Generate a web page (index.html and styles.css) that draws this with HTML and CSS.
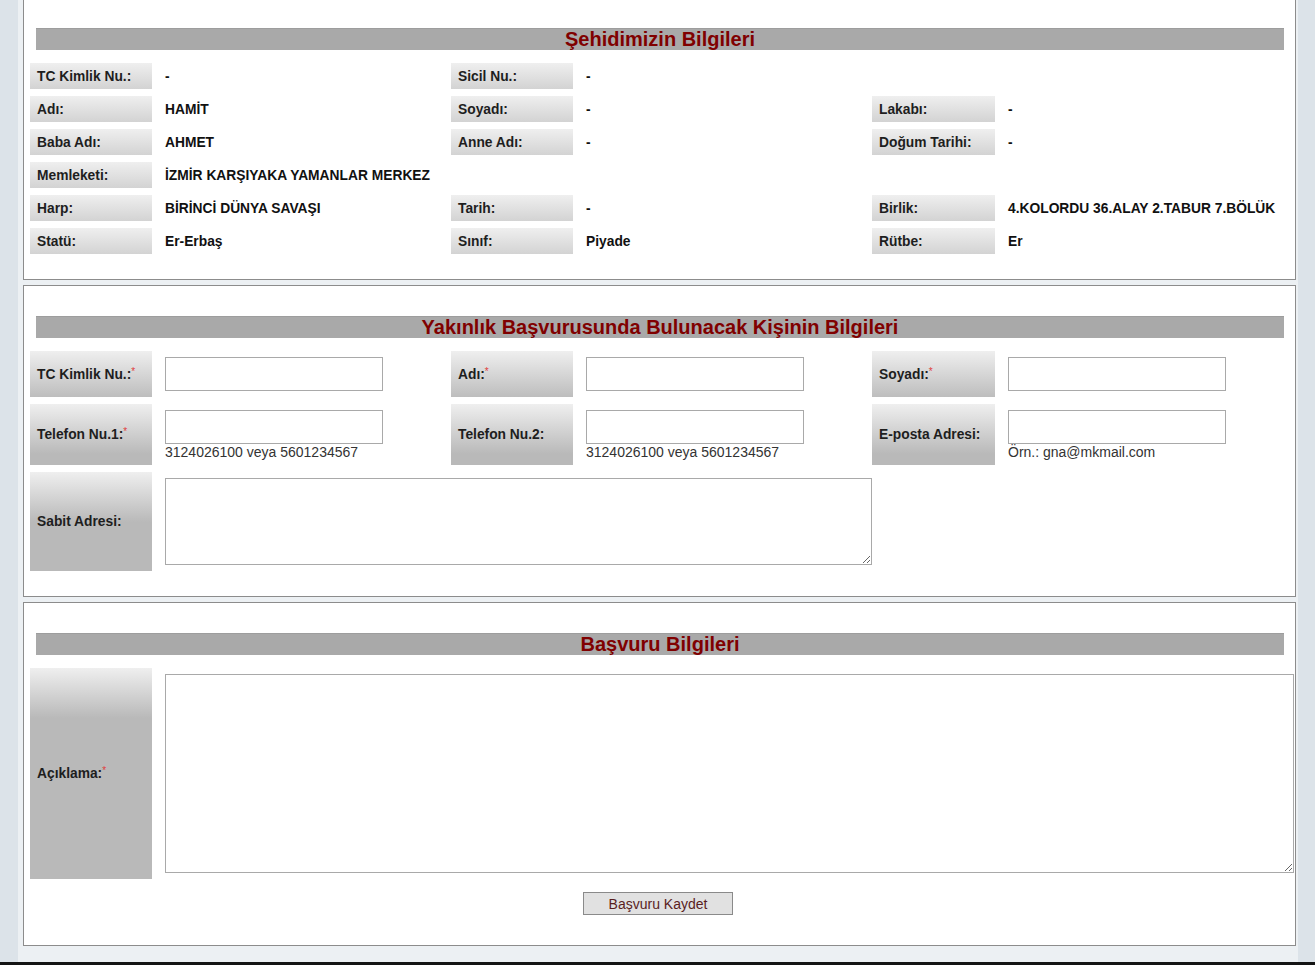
FILE: index.html
```html
<!DOCTYPE html>
<html lang="tr">
<head>
<meta charset="utf-8">
<title>Yakınlık Başvurusu</title>
<link rel="stylesheet" href="styles.css">
</head>
<body>
<div class="page">

  <section class="panel panel-martyr">
    <h2 class="band">Şehidimizin Bilgileri</h2>
    <table class="grid info">
      <colgroup>
        <col class="c-label"><col class="c-value"><col class="c-label"><col class="c-value"><col class="c-label3"><col class="c-value3">
      </colgroup>
      <tr>
        <th>TC Kimlik Nu.:</th><td>-</td>
        <th>Sicil Nu.:</th><td>-</td>
        <td class="blank"></td><td></td>
      </tr>
      <tr>
        <th>Adı:</th><td>HAMİT</td>
        <th>Soyadı:</th><td>-</td>
        <th>Lakabı:</th><td>-</td>
      </tr>
      <tr>
        <th>Baba Adı:</th><td>AHMET</td>
        <th>Anne Adı:</th><td>-</td>
        <th>Doğum Tarihi:</th><td>-</td>
      </tr>
      <tr>
        <th>Memleketi:</th><td>İZMİR KARŞIYAKA YAMANLAR MERKEZ</td>
        <td class="blank"></td><td></td>
        <td class="blank"></td><td></td>
      </tr>
      <tr>
        <th>Harp:</th><td>BİRİNCİ DÜNYA SAVAŞI</td>
        <th>Tarih:</th><td>-</td>
        <th>Birlik:</th><td>4.KOLORDU 36.ALAY 2.TABUR 7.BÖLÜK</td>
      </tr>
      <tr>
        <th>Statü:</th><td>Er-Erbaş</td>
        <th>Sınıf:</th><td>Piyade</td>
        <th>Rütbe:</th><td>Er</td>
      </tr>
    </table>
  </section>

  <section class="panel">
    <h2 class="band">Yakınlık Başvurusunda Bulunacak Kişinin Bilgileri</h2>
    <table class="grid form">
      <colgroup>
        <col class="c-label"><col class="c-value"><col class="c-label"><col class="c-value"><col class="c-label3"><col class="c-value3">
      </colgroup>
      <tr>
        <th>TC Kimlik Nu.:<span class="req">*</span></th>
        <td><input class="field" type="text"></td>
        <th>Adı:<span class="req">*</span></th>
        <td><input class="field" type="text"></td>
        <th>Soyadı:<span class="req">*</span></th>
        <td><input class="field" type="text"></td>
      </tr>
      <tr>
        <th>Telefon Nu.1:<span class="req">*</span></th>
        <td><input class="field" type="text"><span class="hint">3124026100 veya 5601234567</span></td>
        <th>Telefon Nu.2:</th>
        <td><input class="field" type="text"><span class="hint">3124026100 veya 5601234567</span></td>
        <th>E-posta Adresi:</th>
        <td><input class="field" type="text"><span class="hint">Örn.: gna@mkmail.com</span></td>
      </tr>
      <tr>
        <th class="tall">Sabit Adresi:</th>
        <td colspan="3"><textarea class="address"></textarea></td>
        <td class="blank"></td><td></td>
      </tr>
    </table>
  </section>

  <section class="panel panel-apply">
    <h2 class="band">Başvuru Bilgileri</h2>
    <table class="grid apply">
      <colgroup>
        <col class="c-label"><col>
      </colgroup>
      <tr>
        <th>Açıklama:<span class="req">*</span></th>
        <td><textarea class="note"></textarea></td>
      </tr>
    </table>
    <div class="actions">
      <button class="submit" type="button">Başvuru Kaydet</button>
    </div>
  </section>

</div>
<div class="taskbar"></div>
</body>
</html>
```

FILE: styles.css
```css
html, body {
  margin: 0;
  padding: 0;
  overflow: hidden;
  height: 965px;
}

body {
  background: #dce3e9;
  font-family: "Liberation Sans", Arial, sans-serif;
  color: #1a1a1a;
}

/* outer content column */
.page {
  width: 1280px;
  margin: -3px 0 0 18px;
  padding: 0 2px 16px 5px;
  box-sizing: border-box;
  background: #ecf0f3;
}

.panel {
  width: 1273px;
  box-sizing: border-box;
  background: #fff;
  border: 1px solid #8c8c8c;
  padding: 30px 0 18px;
  margin-bottom: 5px;
}

.panel:last-child {
  margin-bottom: 0;
}

.panel-apply {
  padding-bottom: 30px;
}

/* grey section title band */
.band {
  margin: 0 11px 0 12px;
  height: 22px;
  line-height: 21px;
  background: #a9a9a9;
  border-top: 1px solid #9d9d9d;
  box-sizing: border-box;
  text-align: center;
  font-size: 20px;
  font-weight: bold;
  color: #800000;
}

/* label / value grid */
.grid {
  width: 1271px;
  table-layout: fixed;
  border-collapse: separate;
  border-spacing: 6px 7px;
  margin-top: 6px;
}

.c-label { width: 122px; }
.c-value { width: 287px; }
.c-label3 { width: 123px; }
.c-value3 { width: 288px; }

.grid th {
  text-align: left;
  vertical-align: middle;
  padding: 0 7px;
  font-size: 13.8px;
  font-weight: bold;
  color: #1e1e1e;
  white-space: nowrap;
  background-color: #b9b9b9;
  background-image: linear-gradient(#efefef, #b9b9b9 50px);
  background-repeat: no-repeat;
}

.grid td {
  padding: 0 7px;
  vertical-align: middle;
  font-size: 13.8px;
  font-weight: bold;
  color: #111;
  white-space: nowrap;
  overflow: visible;
}

.grid td.blank {
  background: none;
}

.info th,
.info td {
  height: 26px;
}

.form td,
.apply td {
  padding: 6px 7px;
  font-weight: normal;
}

.req {
  color: #e0403c;
  font-size: 10px;
  font-weight: normal;
  vertical-align: top;
  position: relative;
  top: -1px;
}

.field {
  display: block;
  width: 218px;
  height: 34px;
  box-sizing: border-box;
  margin: 0;
  border: 1px solid #a9a9a9;
  background: #fff;
}

.hint {
  display: block;
  height: 15px;
  line-height: 16px;
  font-size: 14px;
  color: #333;
}

textarea {
  display: block;
  margin: 0;
  box-sizing: border-box;
  border: 1px solid #a9a9a9;
  background: #fff;
  font-family: inherit;
}

.address {
  width: 707px;
  height: 87px;
}

.note {
  width: 1129px;
  height: 199px;
}

.actions {
  margin-top: 6px;
  padding-left: 559px;
}

.submit {
  display: block;
  width: 150px;
  height: 23px;
  margin: 0;
  padding: 0;
  background: #e1e1e1;
  border: 1px solid #8a8a8a;
  font-family: "Liberation Sans", Arial, sans-serif;
  font-size: 14px;
  color: #5a1e1e;
}

.taskbar {
  height: 4px;
  background: #141414;
}
```
